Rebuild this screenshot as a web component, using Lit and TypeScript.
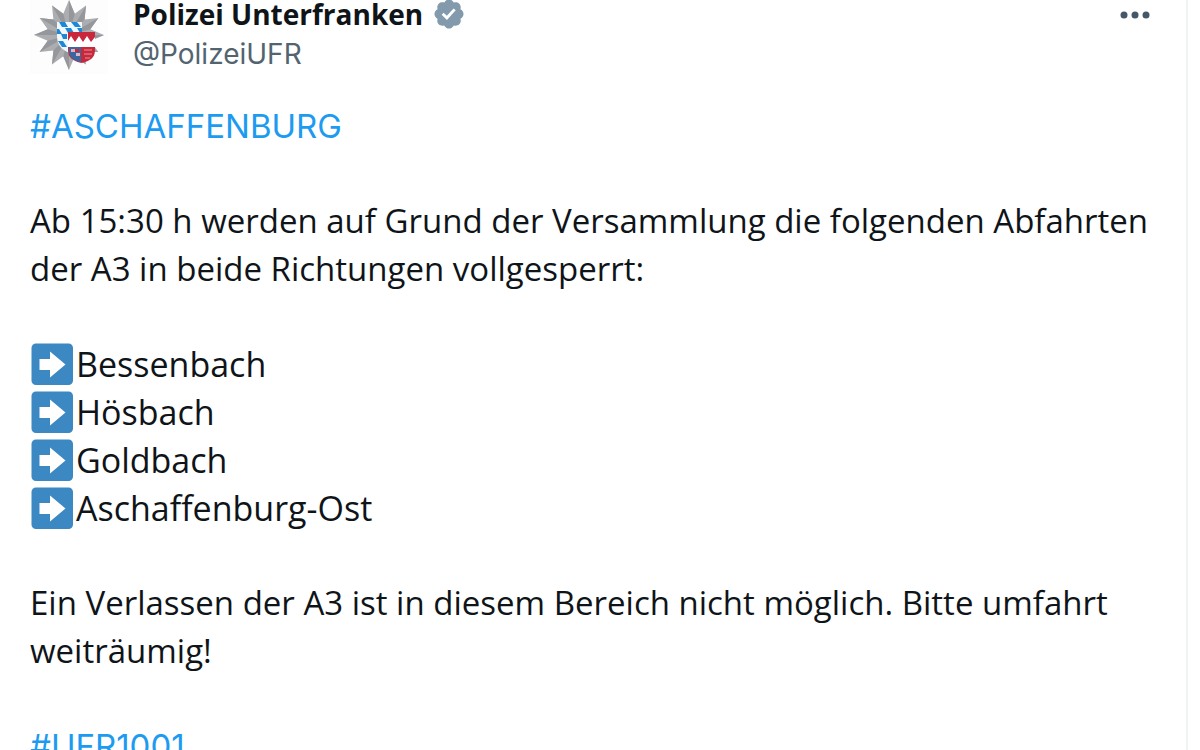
import { LitElement, html, css, svg } from "lit";
import { customElement } from "lit/decorators.js";

const CX = 39;
const CY = 35;
const at = (i: number, r: number) => {
  const a = (Math.PI * i) / 12 - Math.PI / 2;
  return `${(CX + r * Math.cos(a)).toFixed(1)},${(CY + r * Math.sin(a)).toFixed(1)}`;
};
const tip = (i: number) => (i % 6 === 0 ? 35 : 34);
const rays = Array.from({ length: 12 }, (_, k) => k * 2);
const star = rays.map((i) => `${at(i, tip(i))} ${at(i + 1, 22)}`).join(" ");
const facets = rays.map((i) => `M${CX},${CY}L${at(i, tip(i))}L${at(i + 1, 22)}z`).join("");

const badgePath =
  "M22.25 12c0-1.43-.88-2.67-2.19-3.34.46-1.39.2-2.9-.81-3.91s-2.52-1.27-3.91-.81c-.66-1.31-1.91-2.19-3.34-2.19s-2.67.88-3.33 2.19c-1.4-.46-2.91-.2-3.92.81s-1.26 2.52-.8 3.91c-1.31.67-2.2 1.91-2.2 3.34s.89 2.67 2.2 3.34c-.46 1.39-.21 2.9.8 3.91s2.52 1.26 3.91.81c.67 1.31 1.91 2.19 3.34 2.19s2.68-.88 3.34-2.19c1.39.45 2.9.2 3.91-.81s1.27-2.52.81-3.91c1.31-.67 2.19-1.91 2.19-3.34zm-11.71 4.2L6.8 12.46l1.41-1.42 2.26 2.26 4.8-5.23 1.47 1.36-6.2 6.77z";

@customElement("app-root")
export class AppRoot extends LitElement {
  static styles = css`
    :host {
      display: block;
      height: 100vh;
      overflow: hidden;
      background: #fff;
      color: #0f1419;
      font-family: "Open Sans", "Noto Sans", sans-serif;
    }
    .post {
      box-sizing: border-box;
      min-height: 100%;
      margin-right: 12px;
      padding: 0 36px 0 30px;
      border-right: 2px solid #eff3f4;
    }
    .head {
      display: flex;
      align-items: flex-start;
      justify-content: space-between;
      height: 102px;
    }
    .author { display: flex; gap: 25px; }
    .avatar { display: block; }
    .name, .handle {
      display: flex;
      align-items: center;
      gap: 9px;
      text-decoration: none;
      font-size: 28px;
      white-space: nowrap;
    }
    .name { height: 28px; color: #0f1419; font-weight: 700; line-height: 28px; }
    .handle { color: #536471; font-family: Inter, sans-serif; line-height: 52px; }
    .badge { display: block; height: 30px; fill: #829aab; }
    .more {
      padding: 0;
      border: 0;
      background: none;
      cursor: pointer;
    }
    .more svg { display: block; fill: #44586a; }
    .body {
      display: flex;
      flex-direction: column;
      gap: 47px;
      font-size: 33px;
      line-height: 48px;
    }
    p, ul { margin: 0; padding: 0; list-style: none; }
    .tag { color: #1d9bf0; font-family: Inter, sans-serif; text-decoration: none; }
    .exit { display: flex; align-items: center; gap: 3px; font-size: 34px; }
    .arrow { display: block; margin-left: 1px; }
  `;

  private exits = ["Bessenbach", "Hösbach", "Goldbach", "Aschaffenburg-Ost"];

  private arrow() {
    return html`<svg class="arrow" width="42" height="42" viewBox="0 0 42 42" aria-hidden="true">
      <rect x=".5" y=".5" width="41.500" height="41.500" rx="4.500" fill="#3b88c3" />
      <path d="M8.500 16H19V8.500L34.500 21.500 19 34.500V27H8.500z" fill="#fff" />
    </svg>`;
  }

  private crest() {
    return html`<svg class="avatar" width="78" height="74" viewBox="0 0 78 74" role="img" aria-label="Polizei Unterfranken">
      <rect width="78" height="74" fill="#fdfdfd" />
      <polygon points=${star} fill="#acadb0" />
      <path d=${facets} fill="#96979b" />
      ${svg`<path d="M27 22h25v14c0 9-5 14-12.500 17C32 50 27 45 27 36z" fill="#f1f8fd"/>
        <path d="M29 22h6l3 5h-6zM41 22h6l4 5h-6zM35 28h6l3 5h-6zM47 28h5v5h-2zM27 29h2l3 5h-5zM31 34h6v5h-4zM28 41h5l4 6h-5z" fill="#1e88d6"/>
        <path d="M38 32h27v18c0 8-5 11-13.500 13C43 61 38 58 38 50z" fill="#c9283c"/>
        <path d="M38 47v-6l3-5 4 6 4-6 4 6 4-6 4 6 4-5v10z" fill="#fff"/>
        <path d="M39 47h12v15c-8-1-12-5-12-12z" fill="#3a67a0"/>
        <path d="M41 49h4v3h-4zM46 53h4v3h-4z" fill="#e7b4bd"/>
        <path d="M45 49h4v3h-4z" fill="#c9283c"/>
        <path d="M54 50h8M54 54h8M55 58h5" stroke="#dc6f7a" stroke-width="1.500"/>`}
    </svg>`;
  }

  render() {
    return html`<article class="post">
      <header class="head">
        <div class="author">
          ${this.crest()}
          <div>
            <a class="name" href="#profile">Polizei Unterfranken
              <svg class="badge" width="34" height="34" viewBox="0 0 24 21" role="img" aria-label="Verifiziert"><path transform="translate(0 -1.500)" d=${badgePath} /></svg>
            </a>
            <a class="handle" href="#profile">@PolizeiUFR</a>
          </div>
        </div>
        <button class="more" aria-label="Mehr">
          <svg width="30" height="30" viewBox="0 0 30 30"><circle cx="4" cy="15" r="3.500" /><circle cx="15" cy="15" r="3.500" /><circle cx="26" cy="15" r="3.500" /></svg>
        </button>
      </header>
      <div class="body">
        <p><a class="tag" href="#aschaffenburg">#ASCHAFFENBURG</a></p>
        <p>Ab 15:30 h werden auf Grund der Versammlung die folgenden Abfahrten der A3 in beide Richtungen vollgesperrt:</p>
        <ul>${this.exits.map((e) => html`<li class="exit">${this.arrow()}<span>${e}</span></li>`)}</ul>
        <p>Ein Verlassen der A3 ist in diesem Bereich nicht möglich. Bitte umfahrt weiträumig!</p>
        <p><a class="tag" href="#ufr1001">#UFR1001</a></p>
      </div>
    </article>`;
  }
}
